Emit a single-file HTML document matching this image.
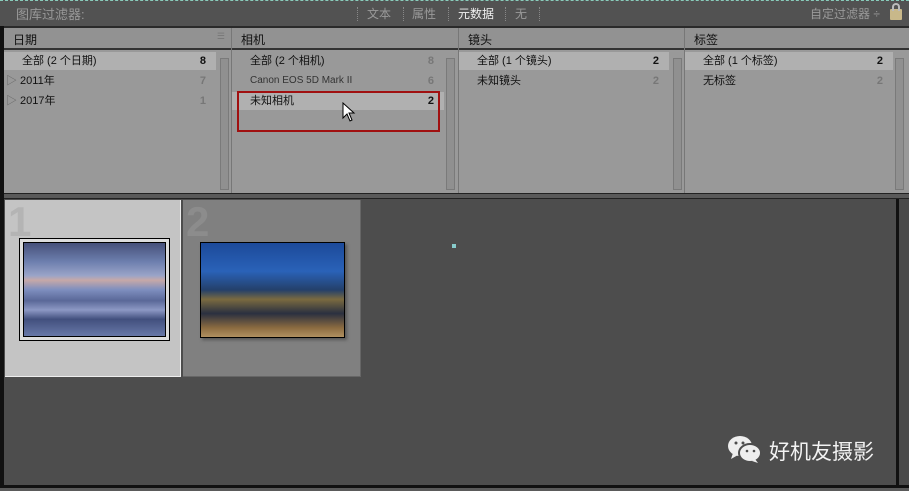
<!DOCTYPE html>
<html><head><meta charset="utf-8"><style>
*{margin:0;padding:0;box-sizing:border-box}
body{width:909px;height:491px;overflow:hidden;background:#4d4d4d;font-family:"Liberation Sans","Noto Sans CJK SC",sans-serif;position:relative}
.a{position:absolute}
.top{left:0;top:0;width:909px;height:26px;background:#525252;border-top:1px dashed #8cb;}
.t{color:#9a9a9a;font-size:12px;top:5px}
.sep{top:7px;width:1px;height:14px;border-left:1px dotted #888}
.panel{left:4px;top:26px;width:905px;height:168px;background:#999;border-top:2px solid #2a2a2a}
.col{top:0;height:166px;border-right:1px solid #777}
.hd{left:0;top:0;right:0;height:22px;background:#929292;border-bottom:2px solid #333;font-size:12px;color:#111;padding:3px 0 0 9px}
.row{left:0;height:18px;line-height:18px;font-size:11px;color:#111;padding:0 0 0 18px}
.row.sel{background:#b0b0b0}
.n{position:absolute;right:10px;top:0;line-height:18px;font-weight:bold;font-size:11px}
.g{color:#777}
.sb{top:30px;width:9px;height:132px;background:#909090;border:1px solid #7a7a7a}
</style></head><body>
<div class="a" style="left:0;top:0;width:4px;height:491px;background:#111"></div>
<div class="a top"></div>
<div class="a t" style="left:16px;font-size:13px;top:4px;color:#999">图库过滤器:</div>
<div class="a sep" style="left:357px"></div>
<div class="a t" style="left:367px">文本</div>
<div class="a sep" style="left:403px"></div>
<div class="a t" style="left:412px">属性</div>
<div class="a sep" style="left:448px"></div>
<div class="a t" style="left:458px;color:#f0f0f0">元数据</div>
<div class="a sep" style="left:505px"></div>
<div class="a t" style="left:515px">无</div>
<div class="a sep" style="left:539px"></div>
<div class="a t" style="left:810px">自定过滤器 ÷</div>
<div class="a" style="left:890px;top:9px;width:12px;height:11px;background:#c8b88a;border-radius:1px"></div>
<div class="a" style="left:892px;top:3px;width:8px;height:8px;border:2px solid #bbb;border-bottom:none;border-radius:4px 4px 0 0"></div>

<div class="a panel">
 <div class="a col" style="left:0;width:228px">
  <div class="a hd">日期<span style="position:absolute;right:6px;top:3px;color:#777;font-size:9px">☰</span></div>
  <div class="a row sel" style="top:24px;width:212px">全部 (2 个日期)<span class="n">8</span></div>
  <div class="a row" style="top:44px;width:212px;padding-left:2px"><span style="color:#666">▷</span> 2011年<span class="n g">7</span></div>
  <div class="a row" style="top:64px;width:212px;padding-left:2px"><span style="color:#666">▷</span> 2017年<span class="n g">1</span></div>
  <div class="a sb" style="left:216px"></div>
 </div>
 <div class="a col" style="left:228px;width:227px">
  <div class="a hd">相机</div>
  <div class="a row" style="top:24px;width:212px">全部 (2 个相机)<span class="n g">8</span></div>
  <div class="a row" style="top:44px;width:212px;color:#333;font-size:10px">Canon EOS 5D Mark II<span class="n g">6</span></div>
  <div class="a row sel" style="top:64px;width:212px">未知相机<span class="n">2</span></div>
  <div class="a" style="left:5px;top:63px;width:203px;height:41px;border:2px solid #a01010"></div>
  <div class="a sb" style="left:214px"></div>
  <svg class="a" style="left:110px;top:74px" width="14" height="20" viewBox="0 0 14 20"><path d="M1 1 L1 16 L5 12 L8 19 L10 18 L7 11 L12 11 Z" fill="#fff" stroke="#000" stroke-width="1"/></svg>
 </div>
 <div class="a col" style="left:455px;width:226px">
  <div class="a hd">镜头</div>
  <div class="a row sel" style="top:24px;width:210px">全部 (1 个镜头)<span class="n">2</span></div>
  <div class="a row" style="top:44px;width:210px">未知镜头<span class="n g">2</span></div>
  <div class="a sb" style="left:214px"></div>
 </div>
 <div class="a col" style="left:681px;width:224px;border-right:none">
  <div class="a hd">标签</div>
  <div class="a row sel" style="top:24px;width:208px">全部 (1 个标签)<span class="n">2</span></div>
  <div class="a row" style="top:44px;width:208px">无标签<span class="n g">2</span></div>
  <div class="a sb" style="left:210px"></div>
 </div>
</div>
<div class="a" style="left:4px;top:193px;width:905px;height:6px;background:#5a5a5a;border-top:1px solid #222;border-bottom:1px solid #222"></div>

<div class="a" style="left:5px;top:200px;width:176px;height:177px;background:#c4c4c4;border-right:1px solid #eee;border-bottom:1px solid #eee"></div>
<div class="a" style="left:8px;top:200px;font-size:42px;font-weight:bold;color:#b4b4b4;line-height:44px">1</div>
<div class="a" style="left:19px;top:238px;width:151px;height:103px;border:1px solid #000;background:#ddd"></div>
<div class="a" style="left:23px;top:242px;width:143px;height:95px;border:1px solid #000;background:linear-gradient(180deg,#46507a 0%,#6d7fae 20%,#9aa4c8 35%,#c6a8a8 40%,#7f8fbf 50%,#5a6898 62%,#8c98c4 72%,#42507e 82%,#6878a8 100%)"></div>
<div class="a" style="left:183px;top:200px;width:178px;height:177px;background:#808080;border-right:1px solid #666;border-bottom:1px solid #666"></div>
<div class="a" style="left:186px;top:200px;font-size:42px;font-weight:bold;color:#8c8c8c;line-height:44px">2</div>
<div class="a" style="left:200px;top:242px;width:145px;height:96px;border:1px solid #000;background:linear-gradient(180deg,#1c4a9a 0%,#2a62b8 30%,#24406a 50%,#7a6a40 60%,#2a3040 75%,#8a6a40 90%,#b09060 100%);box-shadow:2px 2px 3px #555"></div>
<div class="a" style="left:452px;top:244px;width:4px;height:4px;background:#8cc"></div>

<div class="a" style="left:896px;top:199px;width:3px;height:292px;background:#111"></div>
<div class="a" style="left:899px;top:199px;width:10px;height:292px;background:#4a4a4a"></div>
<div class="a" style="left:0;top:485px;width:909px;height:3px;background:#111"></div>
<div class="a" style="left:0;top:488px;width:909px;height:3px;background:#5a5a5a"></div>

<svg class="a" style="left:727px;top:434px" width="36" height="30" viewBox="0 0 36 30"><ellipse cx="13" cy="12" rx="12" ry="10" fill="#eee"/><path d="M6 19 L4 25 L11 21Z" fill="#eee"/><ellipse cx="23" cy="19" rx="11" ry="9" stroke="#4d4d4d" stroke-width="2" fill="#eee"/><path d="M28 25 L31 29 L25 27Z" fill="#eee"/><circle cx="9" cy="9" r="1.5" fill="#4d4d4d"/><circle cx="16" cy="9" r="1.5" fill="#4d4d4d"/><circle cx="20" cy="17" r="1.3" fill="#4d4d4d"/><circle cx="27" cy="17" r="1.3" fill="#4d4d4d"/></svg>
<div class="a" style="left:769px;top:436px;font-size:21px;color:#f2f2f2">好机友摄影</div>
</body></html>
